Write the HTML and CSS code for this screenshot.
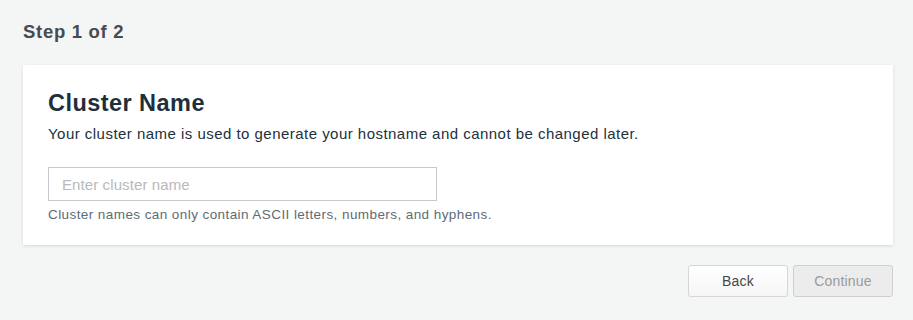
FILE: index.html
```html
<!DOCTYPE html>
<html>
<head>
<meta charset="utf-8">
<link rel="stylesheet" href="styles.css">
</head>
<body>
<div class="page">
  <h2 class="step">Step 1 of 2</h2>
  <div class="card">
    <h1 class="title">Cluster Name</h1>
    <p class="desc">Your cluster name is used to generate your hostname and cannot be changed later.</p>
    <input class="input" type="text" placeholder="Enter cluster name">
    <p class="help">Cluster names can only contain ASCII letters, numbers, and hyphens.</p>
  </div>
  <div class="actions">
    <button class="btn">Back</button>
    <button class="btn btn-disabled" disabled>Continue</button>
  </div>
</div>
</body>
</html>
```
FILE: styles.css
```css
html, body {
  margin: 0;
  padding: 0;
  background: #f4f5f5;
  font-family: "Liberation Sans", Arial, sans-serif;
}
.page {
  padding: 21px 20px 0 23px;
}
.step {
  margin: 0;
  font-size: 18.5px;
  font-weight: bold;
  letter-spacing: 0.7px;
  color: #464c4f;
  line-height: 22px;
}
.card {
  margin-top: 22px;
  background: #fff;
  box-shadow: 0 1px 3px rgba(0,0,0,0.12);
  padding: 24px 25px 21px 25px;
}
.title {
  margin: 0;
  font-size: 23.5px;
  font-weight: bold;
  letter-spacing: 0.45px;
  color: #1e2f3b;
  line-height: 28px;
}
.desc {
  margin: 7px 0 0 0;
  font-size: 15px;
  letter-spacing: 0.47px;
  color: #21313c;
  line-height: 20px;
}
.input {
  display: block;
  margin-top: 23px;
  box-sizing: border-box;
  width: 389px;
  height: 34px;
  border: 1px solid #c9c9c9;
  padding: 0 13px;
  font-family: inherit;
  font-size: 15px;
  letter-spacing: 0.1px;
  outline: none;
}
.input::placeholder {
  color: #b9b9b9;
}
.help {
  margin: 5px 0 0 0;
  font-size: 13.5px;
  letter-spacing: 0.42px;
  color: #5d6c74;
  line-height: 18px;
}
.actions {
  display: flex;
  justify-content: flex-end;
  gap: 5px;
  margin-top: 20px;
}
.btn {
  width: 100px;
  height: 32px;
  box-sizing: border-box;
  border: 1px solid #d6d6d6;
  border-radius: 3px;
  background: linear-gradient(#fff, #f6f6f6);
  box-shadow: 0 1px 1px rgba(0,0,0,0.06);
  font-family: inherit;
  font-size: 14px;
  letter-spacing: 0.2px;
  color: #464646;
}
.btn-disabled {
  background: #ececec;
  border-color: #cfcfcf;
  color: #9a9a9a;
  box-shadow: none;
}
```
